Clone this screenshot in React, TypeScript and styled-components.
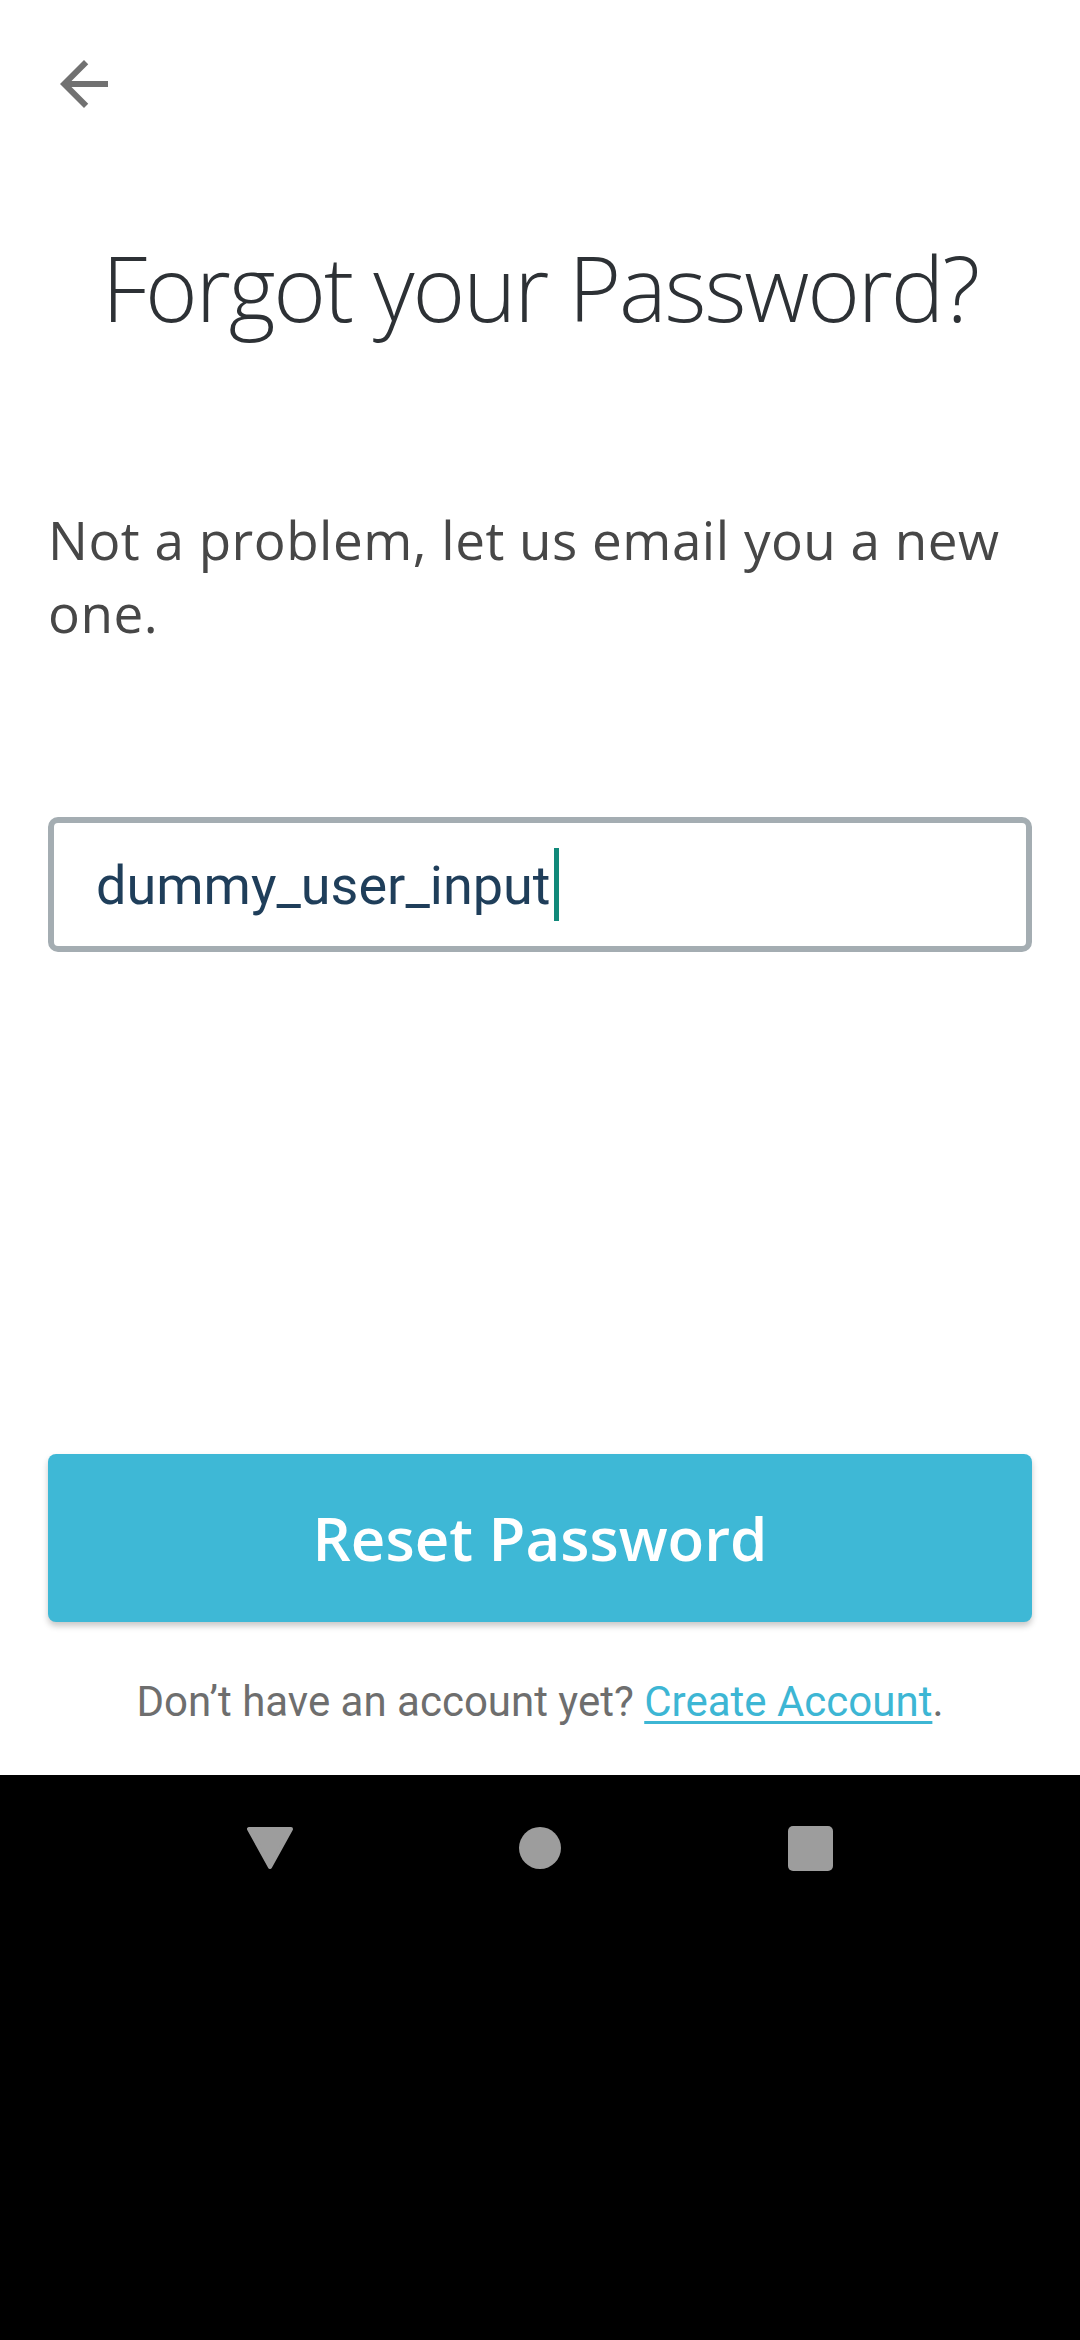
import React from "react";
import styled, { createGlobalStyle } from "styled-components";

const GlobalStyle = createGlobalStyle`
  html, body {
    margin: 0;
    padding: 0;
    background: #000000;
  }
  * { box-sizing: border-box; }
`;

const Page = styled.div`
  width: 1080px;
  display: flex;
  flex-direction: column;
`;

const Screen = styled.main`
  height: 1775px;
  background: #ffffff;
  display: flex;
  flex-direction: column;
  padding: 48px 48px 49px 48px;
`;

const TopBar = styled.header`
  display: flex;
  align-items: center;
  height: 72px;
`;

const BackButton = styled.button`
  width: 72px;
  height: 72px;
  padding: 0;
  border: none;
  background: transparent;
  display: flex;
  align-items: center;
  justify-content: center;
  color: #717171;
`;

const Title = styled.h1`
  margin: 113px 0 0 0;
  font-family: "Open Sans", "Liberation Sans", sans-serif;
  font-weight: 300;
  font-size: 90px;
  line-height: 108px;
  letter-spacing: -2.1px;
  color: #2d3135;
  text-align: center;
`;

const Lead = styled.p`
  margin: 162px 0 0 0;
  font-family: "Open Sans", "Liberation Sans", sans-serif;
  font-weight: 400;
  font-size: 53px;
  line-height: 73px;
  letter-spacing: 0.5px;
  color: #474747;
`;

const Field = styled.div`
  margin-top: 168px;
  height: 135px;
  border: 6px solid #a4adb2;
  border-radius: 10px;
  display: flex;
  align-items: center;
  padding-left: 42px;
  background: #ffffff;
`;

const FieldText = styled.span`
  font-family: Roboto, "Liberation Sans", sans-serif;
  font-size: 54px;
  color: #1f3e5a;
  padding-top: 2px;
`;

const Caret = styled.span`
  width: 5px;
  height: 73px;
  margin-left: 3px;
  background: #11897a;
`;

const Spacer = styled.div`
  flex: 1;
`;

const PrimaryButton = styled.button`
  height: 168px;
  width: 100%;
  border: none;
  border-radius: 8px;
  background: #3eb8d6;
  box-shadow: 0 4px 6px rgba(0, 0, 0, 0.22);
  color: #ffffff;
  font-family: "Open Sans", "Liberation Sans", sans-serif;
  font-weight: 600;
  font-size: 60px;
  display: flex;
  align-items: center;
  justify-content: center;
  padding: 0;
`;

const Footer = styled.p`
  margin: 55px 0 0 0;
  font-family: Roboto, "Liberation Sans", sans-serif;
  font-size: 42px;
  line-height: 49px;
  color: #6e6e6e;
  text-align: center;
`;

const FooterLink = styled.a`
  color: #3db6d4;
  text-decoration: underline;
  text-decoration-thickness: 3px;
  text-underline-offset: 5px;
`;

const NavBar = styled.nav`
  height: 565px;
  background: #000000;
`;

const NavRow = styled.div`
  height: 146px;
  display: flex;
  justify-content: center;
  align-items: center;
`;

const NavCell = styled.div`
  width: 270px;
  display: flex;
  justify-content: center;
  align-items: center;
`;

const HomeDot = styled.div`
  width: 42px;
  height: 42px;
  border-radius: 50%;
  background: #9d9d9d;
`;

const RecentsSquare = styled.div`
  width: 45px;
  height: 45px;
  border-radius: 5px;
  background: #9d9d9d;
`;

export default function App() {
  return (
    <Page>
      <GlobalStyle />
      <Screen>
        <TopBar>
          <BackButton aria-label="Back">
            <svg width="72" height="72" viewBox="0 0 24 24" fill="currentColor">
              <path d="M20 11H7.83l5.59-5.59L12 4l-8 8 8 8 1.41-1.41L7.83 13H20v-2z" />
            </svg>
          </BackButton>
        </TopBar>
        <Title>Forgot your Password?</Title>
        <Lead>Not a problem, let us email you a new one.</Lead>
        <Field>
          <FieldText>dummy_user_input</FieldText>
          <Caret />
        </Field>
        <Spacer />
        <PrimaryButton>Reset Password</PrimaryButton>
        <Footer>
          Don’t have an account yet? <FooterLink href="#">Create Account</FooterLink>.
        </Footer>
      </Screen>
      <NavBar>
        <NavRow>
          <NavCell>
            <svg width="48" height="44" viewBox="0 0 48 44">
              <polygon
                points="3,3 45,3 24,41"
                fill="#9d9d9d"
                stroke="#9d9d9d"
                strokeWidth="4"
                strokeLinejoin="round"
              />
            </svg>
          </NavCell>
          <NavCell>
            <HomeDot />
          </NavCell>
          <NavCell>
            <RecentsSquare />
          </NavCell>
        </NavRow>
      </NavBar>
    </Page>
  );
}
